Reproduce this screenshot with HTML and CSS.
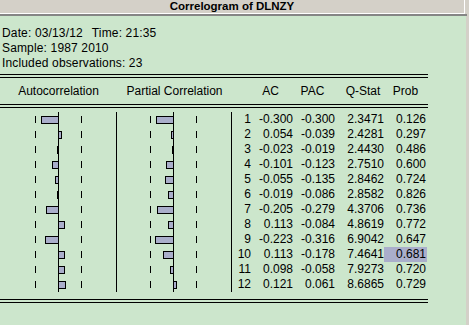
FILE: index.html
```html
<!DOCTYPE html>
<html>
<head>
<meta charset="utf-8">
<link rel="stylesheet" href="styles.css">
</head>
<body>
<div class="window">
  <div class="titlebar"><div class="title">Correlogram of DLNZY</div></div>
  <div class="shadow"></div>
  <div class="frame">
    <div class="content">
      <div class="info">
        <div class="line">Date: 03/13/12<span class="gap">Time: 21:35</span></div>
        <div class="line">Sample: 1987 2010</div>
        <div class="line">Included observations: 23</div>
      </div>
      <div class="table">
        <div class="dbl"></div>
        <div class="grid head">
          <div class="h-chart1">Autocorrelation</div>
          <div class="h-chart2">Partial Correlation</div>
          <div class="h-num"></div>
          <div class="h-ac">AC</div>
          <div class="h-pac">PAC</div>
          <div class="h-q">Q-Stat</div>
          <div class="h-prob">Prob</div>
        </div>
        <div class="dbl"></div>
        <div class="rows" id="rows"></div>
        <div class="dbl"></div>
      </div>
    </div>
    <div class="edge"></div>
  </div>
</div>
<script src="app.js"></script>
</body>
</html>
```
FILE: styles.css
```css
* { box-sizing: border-box; }
html, body { margin: 0; padding: 0; }
body {
  background: #d4d0c8;
  font-family: "Liberation Sans", Arial, sans-serif;
  font-size: 12px;
  color: #000;
}
.window {
  width: 469px;
  height: 325px;
  display: flex;
  flex-direction: column;
  overflow: hidden;
}
.titlebar {
  height: 14px;
  display: flex;
  background: #d4d0c8;
}
.title {
  width: 465px;
  height: 14px;
  border-right: 1px solid #fff;
  border-bottom: 1px solid #fff;
  text-align: center;
  font-weight: bold;
  font-size: 11.5px;
  line-height: 13px;
}
.shadow {
  width: 467px;
  height: 2px;
  background: #858585;
}
.frame {
  flex: 1;
  display: flex;
}
.content {
  width: 466px;
  background: #cce6cc;
}
.edge {
  flex: 1;
  background: #d4d0c8;
}
.info {
  padding: 10px 0 0 2px;
  height: 58px;
  letter-spacing: 0.15px;
}
.line {
  white-space: pre;
  line-height: 15px;
  height: 15px;
}
.gap { margin-left: 9px; }
.table {
  width: 428px;
}
.dbl {
  height: 4px;
  border-top: 1px solid #000;
  border-bottom: 1px solid #000;
}
.grid {
  display: grid;
  grid-template-columns: 117px 115px 19px 42px 42px 49px 43px;
}
.head {
  height: 26px;
  line-height: 26px;
}
.head > div { text-align: center; }
.h-ac { padding-right: 3px; }
.h-pac { padding-right: 3px; }
.h-q { padding-left: 7px; }
.rows {
  padding: 4px 0 7px;
}
.row {
  height: 15px;
  line-height: 15px;
}
.c1, .c2 {
  display: flex;
  border-right: 1px solid #000;
  height: 15px;
}
.neg {
  display: grid;
  align-items: center;
  border-right: 1px solid #000;
}
.c1 .neg { width: 59px; grid-template-columns: 35px 1px 1fr; }
.c2 .neg { width: 57px; grid-template-columns: 33px 1px 1fr; }
.pos {
  display: grid;
  align-items: center;
  grid-template-columns: 22px 1px 1fr;
  flex: 1;
}
.dash {
  width: 1px;
  height: 7px;
  background: #000;
}
.neg .bar {
  justify-self: end;
  border-right: none;
}
.pos .bar {
  grid-column: 1;
  grid-row: 1;
  justify-self: start;
  border-left: none;
}
.pos .dash { grid-column: 2; grid-row: 1; }
.bar {
  height: 8px;
  background: #aaaecb;
  border: 1px solid #000;
}
.num { text-align: right; }
.val { text-align: right; }
.prob { padding-right: 1px; }
.hl { background: #aaaecb; }
```
FILE: app.js
```js
const ac = [-0.300, 0.054, -0.023, -0.101, -0.055, -0.019, -0.205, 0.113, -0.223, 0.113, 0.098, 0.121];
const pac = [-0.300, -0.039, -0.019, -0.123, -0.135, -0.086, -0.279, -0.084, -0.316, -0.178, -0.058, 0.061];
const q = ["2.3471","2.4281","2.4430","2.7510","2.8462","2.8582","4.3706","4.8619","6.9042","7.4641","7.9273","8.6865"];
const p = ["0.126","0.297","0.486","0.600","0.724","0.826","0.736","0.772","0.647","0.681","0.720","0.729"];
const SCALE = 57;

function chart(cls, v) {
  const w = Math.max(1, Math.round(Math.abs(v) * SCALE));
  const negBar = v < 0 ? `<div class="bar" style="width:${w}px"></div>` : '';
  const posBar = v >= 0 ? `<div class="bar" style="width:${w}px"></div>` : '';
  return `<div class="${cls}"><div class="neg"><span></span><div class="dash"></div>${negBar}</div><div class="pos">${posBar}<div class="dash"></div></div></div>`;
}
const fmt = v => v.toFixed(3);
const rows = document.getElementById('rows');
let html = '';
for (let i = 0; i < 12; i++) {
  html += `<div class="grid row">${chart('c1', ac[i])}${chart('c2', pac[i])}<div class="num">${i + 1}</div><div class="val">${fmt(ac[i])}</div><div class="val">${fmt(pac[i])}</div><div class="val">${q[i]}</div><div class="val prob${i === 9 ? ' hl' : ''}">${p[i]}</div></div>`;
}
rows.innerHTML = html;
```
